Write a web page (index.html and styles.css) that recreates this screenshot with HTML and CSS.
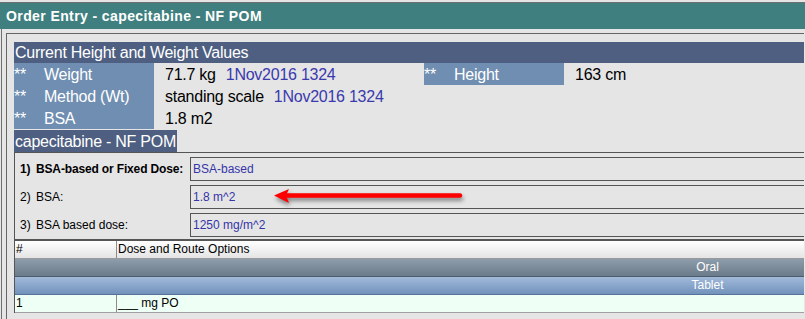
FILE: index.html
```html
<!DOCTYPE html>
<html lang="en">
<head>
  <title>Order Entry - capecitabine - NF POM</title>
  <link rel="stylesheet" href="styles.css">
</head>
<body>
  <div class="window">
    <div class="title-bar">Order Entry - capecitabine - NF POM</div>

    <div class="window-body">
      <div class="frame">
        <div class="section-header">Current Height and Weight Values</div>

        <div class="hw-grid">
          <div class="hw-label"><span class="star">**</span>Weight</div>
          <div class="hw-value">71.7 kg<span class="date">1Nov2016 1324</span></div>
          <div class="hw-label"><span class="star">**</span>Height</div>
          <div class="hw-value">163 cm</div>

          <div class="hw-label"><span class="star">**</span>Method (Wt)</div>
          <div class="hw-value">standing scale<span class="date">1Nov2016 1324</span></div>
          <div></div>
          <div></div>

          <div class="hw-label"><span class="star">**</span>BSA</div>
          <div class="hw-value">1.8 m2</div>
          <div></div>
          <div></div>
        </div>

        <div class="drug-name">capecitabine - NF POM</div>

        <div class="form-panel">
          <div class="form-row">
            <div class="form-label bold"><span class="num">1)</span>BSA-based or Fixed Dose:</div>
            <div class="form-value">BSA-based</div>
          </div>
          <div class="form-row">
            <div class="form-label"><span class="num">2)</span>BSA:</div>
            <div class="form-value">1.8 m^2</div>
          </div>
          <div class="form-row">
            <div class="form-label"><span class="num">3)</span>BSA based dose:</div>
            <div class="form-value">1250 mg/m^2</div>
          </div>
        </div>

        <div class="dose-table">
          <div class="table-row head-row">
            <div class="cell">#</div>
            <div class="cell sep">Dose and Route Options</div>
          </div>
          <div class="table-row route-row">
            <div class="cell"></div>
            <div class="cell centered">Oral</div>
          </div>
          <div class="table-row form-type-row">
            <div class="cell"></div>
            <div class="cell centered">Tablet</div>
          </div>
          <div class="table-row option-row">
            <div class="cell">1</div>
            <div class="cell sep">___ mg PO</div>
          </div>
        </div>
      </div>
    </div>
  </div>

  <!-- red annotation arrow pointing at the BSA value -->
  <svg class="arrow" width="200" height="26" viewBox="0 0 200 26">
    <line x1="18" y1="11.5" x2="192" y2="11.5" stroke="#ff0000" stroke-width="4.5" stroke-linecap="round"/>
    <polygon points="6,11.5 21,5 18,11.5 21,19" fill="#ff0000"/>
  </svg>
</body>
</html>
```

FILE: styles.css
```css
body {
  margin: 0;
  background-color: #e5e5e5;
  font-family: "Liberation Sans", Arial, sans-serif;
  overflow: hidden;
  height: 319px;
}

.window {
  margin-top: 2px;
  border-top: 1px solid #6e6e6e;
}

.title-bar {
  height: 26px;
  line-height: 26px;
  background-color: #407f7f;
  color: white;
  font-size: 14px;
  font-weight: bold;
  letter-spacing: 0.4px;
  padding-left: 6px;
}

.window-body {
  margin-left: 1px;
  border-left: 1px solid #707070;
  padding: 4px 0 0 4px;
  height: 300px;
}

.frame {
  width: 798px;
  box-sizing: border-box;
  height: 100%;
  border-top: 1px solid #666666;
  border-left: 1px solid #666666;
  padding: 8px 0 0 7px;
  overflow: hidden;
}

.section-header {
  height: 21px;
  line-height: 21px;
  background-color: #4e5f81;
  color: white;
  font-size: 16px;
  letter-spacing: -0.25px;
  padding-left: 1px;
}

.hw-grid {
  display: grid;
  grid-template-columns: 140px 270px 140px 1fr;
  grid-auto-rows: 22px;
  font-size: 16px;
  letter-spacing: -0.25px;
}

.hw-label {
  background-color: #6f8eb1;
  color: white;
  padding-top: 2px;
  line-height: 20px;
}

.star {
  display: inline-block;
  width: 30px;
}

.hw-value {
  color: black;
  padding: 2px 0 0 11px;
  line-height: 20px;
}

.date {
  color: #3a3aae;
  margin-left: 10px;
}

.drug-name {
  display: inline-block;
  margin-top: 1px;
  height: 21px;
  padding: 1px 1px 0 1px;
  line-height: 21px;
  background-color: #4e5f81;
  color: white;
  font-size: 16px;
  letter-spacing: -0.25px;
}

.form-panel {
  border-top: 1px solid #555555;
  border-left: 1px solid #555555;
  padding: 4px 0 2px 0;
  font-size: 12px;
}

.form-row {
  display: flex;
  height: 24px;
  margin-bottom: 4px;
}

.form-row:last-child {
  margin-bottom: 0;
}

.form-label {
  width: 175px;
  box-sizing: border-box;
  padding-left: 5px;
  line-height: 24px;
  color: black;
}

.bold {
  font-weight: bold;
  letter-spacing: -0.15px;
}

.num {
  display: inline-block;
  width: 16px;
}

.form-value {
  flex: 1;
  box-sizing: border-box;
  border: 1px solid #555555;
  border-right: none;
  padding-left: 2px;
  line-height: 22px;
  color: #3535a8;
}

.dose-table {
  width: 1283px;
  border-top: 2px solid #555555;
  border-left: 1px solid #555555;
  font-size: 12px;
}

.table-row {
  display: grid;
  grid-template-columns: 101px 1fr;
  height: 17px;
  line-height: 17px;
}

.cell {
  padding-left: 1px;
}

.sep {
  border-left: 1px solid #8c8c8c;
}

.centered {
  text-align: center;
  padding-left: 0;
  margin-left: 1px;
  color: white;
}

.head-row {
  background: linear-gradient(#ffffff, #e4e4e4);
  border-bottom: 1px solid #9a9a9a;
}

.route-row {
  background: linear-gradient(#8e9dab, #6b7b89);
  border-bottom: 1px solid #4c5c6a;
}

.form-type-row {
  background: linear-gradient(#a2badb, #7192bb);
  border-bottom: 1px solid #56709a;
}

.option-row {
  background-color: #eefff5;
  border-bottom: 1px solid #a0a0a0;
}

.arrow {
  position: absolute;
  left: 268px;
  top: 184px;
  filter: drop-shadow(1px 3px 2px rgba(0, 0, 0, 0.45));
}
```
